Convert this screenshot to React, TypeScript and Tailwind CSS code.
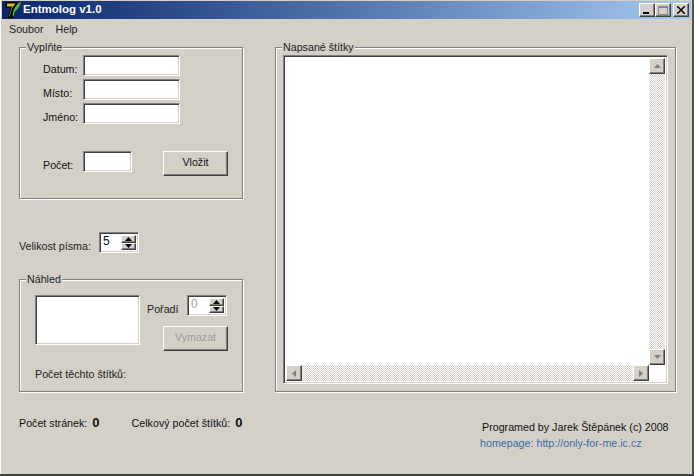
import React from "react";

const raised = "border border-t-white border-l-white border-r-[#404040] border-b-[#404040] shadow-[inset_-1px_-1px_0_#808080]";
const sunken = "border border-t-[#808080] border-l-[#808080] border-r-white border-b-white shadow-[inset_1px_1px_0_#404040,inset_-1px_-1px_0_#d4d0c8] bg-white";

function Tri({ dir, color = "#000" }: { dir: "up" | "down" | "left" | "right"; color?: string }) {
  const pts = { up: "3.5,0 7,4 0,4", down: "0,0 7,0 3.5,4", left: "4,0 4,7 0,3.5", right: "0,0 4,3.5 0,7" }[dir];
  const vertical = dir === "up" || dir === "down";
  return (
    <svg width={vertical ? 7 : 4} height={vertical ? 4 : 7} viewBox={vertical ? "0 0 7 4" : "0 0 4 7"} className="block">
      <polygon points={pts} fill={color} />
    </svg>
  );
}

function Group({ title, className, children }: { title: string; className: string; children: React.ReactNode }) {
  return (
    <div className={"relative border border-[#808080] shadow-[1px_1px_0_#fff,inset_1px_1px_0_#fff] " + className}>
      <span className="absolute left-[6px] top-[-7px] bg-[#d4d0c8] pl-[1px] pr-[1px] leading-[13px] text-[#222]">{title}</span>
      {children}
    </div>
  );
}

function Input({ className }: { className: string }) {
  return <div className={sunken + " " + className} />;
}

function Spin({ value, disabled }: { value: string; disabled?: boolean }) {
  return (
    <div className={sunken + " flex h-[21px] w-[40px] items-stretch p-[2px]"}>
      <span className={"w-[20px] pl-[1px] text-[12px] leading-[13px] " + (disabled ? "text-[#a5a5a5]" : "text-[#111]")}>{value}</span>
      <div className="flex w-[16px] flex-col">
        <div className={raised + " flex flex-1 items-center justify-center bg-[#d4d0c8]"}>
          <Tri dir="up" />
        </div>
        <div className={raised + " flex flex-1 items-center justify-center bg-[#d4d0c8]"}>
          <Tri dir="down" />
        </div>
      </div>
    </div>
  );
}

function Button({ label, disabled, className }: { label: string; disabled?: boolean; className: string }) {
  return (
    <div className={raised + " flex h-[25px] w-[65px] items-center justify-center bg-[#d4d0c8] pb-[2px] " + (disabled ? "text-[#a09c96] " : "text-[#111] ") + className}>
      {label}
    </div>
  );
}

function ScrollBtn({ dir }: { dir: "up" | "down" | "left" | "right" }) {
  return (
    <div className={raised + " flex h-[16px] w-[16px] shrink-0 items-center justify-center bg-[#d4d0c8]"}>
      <Tri dir={dir} color="#808080" />
    </div>
  );
}

function Row({ label, className, inputClass }: { label: string; className?: string; inputClass: string }) {
  return (
    <div className={"flex h-[21px] items-end pl-[23px] " + (className ?? "")}>
      <span className="w-[40px] pb-[0px] leading-[13px] text-[#111]">{label}</span>
      <Input className={inputClass} />
    </div>
  );
}

const track = "bg-[repeating-conic-gradient(#ffffff_0_25%,#d4d0c8_0_50%)] bg-[length:2px_2px]";

export default function App() {
  return (
    <div className="box-border flex h-[476px] w-[694px] flex-col overflow-hidden border-b-2 border-r-2 border-b-[#404040] border-r-[#505050] bg-[#d4d0c8] pl-[1px] pt-[1px] font-['Liberation_Sans',Arial,sans-serif] text-[10.7px] shadow-[inset_1px_0_0_#fff]">
      <div className="ml-[1px] mr-[1px] flex h-[18px] shrink-0 items-center bg-gradient-to-r from-[#0a246a] to-[#a6caf0] pl-[2px] pr-[2px]">
        <svg width="18" height="18" viewBox="0 0 18 18" className="shrink-0">
          <path d="M1.5 1h12L9 17H3.5L7 7H2z" fill="#050505" />
          <path d="M3 2.5h8.5L8 7 5.5 15.5H5L8 5.5H3z" fill="#d8c61e" />
          <path d="M9 11c1-4 3.5-8 8-10.5C16.5 4 14 8 11 10.5L9.5 15h-1z" fill="#58b030" />
        </svg>
        <span className="ml-[1px] text-[11.5px] font-bold leading-none text-white">Entmolog v1.0</span>
        <div className="ml-auto flex items-center">
          <div className={raised + " flex h-[14px] w-[16px] items-end justify-start bg-[#d4d0c8] pb-[2px] pl-[3px]"}>
            <div className="h-[2px] w-[6px] bg-black" />
          </div>
          <div className={raised + " flex h-[14px] w-[16px] items-center justify-center bg-[#d4d0c8]"}>
            <div className="h-[9px] w-[10px] border border-t-2 border-[#888]" />
          </div>
          <div className={raised + " ml-[2px] flex h-[14px] w-[16px] items-center justify-center bg-[#d4d0c8]"}>
            <svg width="8" height="8" viewBox="0 0 8 8">
              <path d="M0 0l8 8M8 0L0 8" stroke="#000" strokeWidth="1.5" />
            </svg>
          </div>
        </div>
      </div>

      <div className="flex h-[20px] shrink-0 items-center gap-[12px] pl-[8px] pt-[1px] text-[#222]">
        <span>Soubor</span>
        <span>Help</span>
      </div>

      <div className="mt-[8px] flex items-start pl-[18px]">
        <div className="w-[224px]">
          <Group title="Vyplňte" className="h-[152px] pt-[7px]">
            <Row label="Datum:" inputClass="h-[21px] w-[97px]" />
            <Row label="Místo:" className="mt-[3px]" inputClass="h-[21px] w-[97px]" />
            <Row label="Jméno:" className="mt-[3px]" inputClass="h-[21px] w-[97px]" />
            <div className="mt-[27px] flex items-start">
              <Row label="Počet:" inputClass="h-[21px] w-[49px]" />
              <Button label="Vložit" className="ml-[31px]" />
            </div>
          </Group>

          <div className="mt-[33px] flex h-[21px] items-end">
            <span className="w-[80px] leading-[13px] text-[#222]">Velikost písma:</span>
            <Spin value="5" />
          </div>

          <Group title="Náhled" className="mt-[26px] h-[113px] pl-[15px] pt-[15px]">
            <div className="flex items-start">
              <Input className="h-[50px] w-[105px]" />
              <div className="ml-[7px]">
                <div className="flex h-[21px] items-end">
                  <span className="w-[40px] leading-[13px] text-[#222]">Pořadí</span>
                  <Spin value="0" disabled />
                </div>
                <Button label="Vymazat" disabled className="ml-[16px] mt-[10px]" />
              </div>
            </div>
            <div className="mt-[15px] leading-[16px] text-[#222]">Počet těchto štítků:</div>
          </Group>
        </div>

        <Group title="Napsané štítky" className="ml-[32px] flex h-[345px] w-[401px] p-[7px]">
          <div className={sunken + " flex h-full w-full p-[2px]"}>
            <div className="flex min-w-0 flex-1 flex-col">
              <div className="flex min-h-0 flex-1">
                <div className="flex-1" />
                <div className={"flex w-[16px] flex-col justify-between " + track}>
                  <ScrollBtn dir="up" />
                  <ScrollBtn dir="down" />
                </div>
              </div>
              <div className="flex h-[16px] pr-[16px]">
                <div className={"flex flex-1 justify-between " + track}>
                  <ScrollBtn dir="left" />
                  <ScrollBtn dir="right" />
                </div>
              </div>
            </div>
          </div>
        </Group>
      </div>

      <div className="mt-[21px] flex items-start pl-[18px]">
        <div className="flex w-[461px] items-center text-[#111]">
          <span>Počet stránek:</span>
          <b className="ml-[5px] text-[13px]">0</b>
          <span className="ml-[32px]">Celkový počet štítků:</span>
          <b className="ml-[5px] text-[13px]">0</b>
        </div>
        <div className="mt-[6px] leading-[16px]">
          <div className="pl-[2px] text-[#111]">Programed by Jarek Štěpánek (c) 2008</div>
          <div className="text-[#3a6ea5]">homepage: http://only-for-me.ic.cz</div>
        </div>
      </div>
    </div>
  );
}
